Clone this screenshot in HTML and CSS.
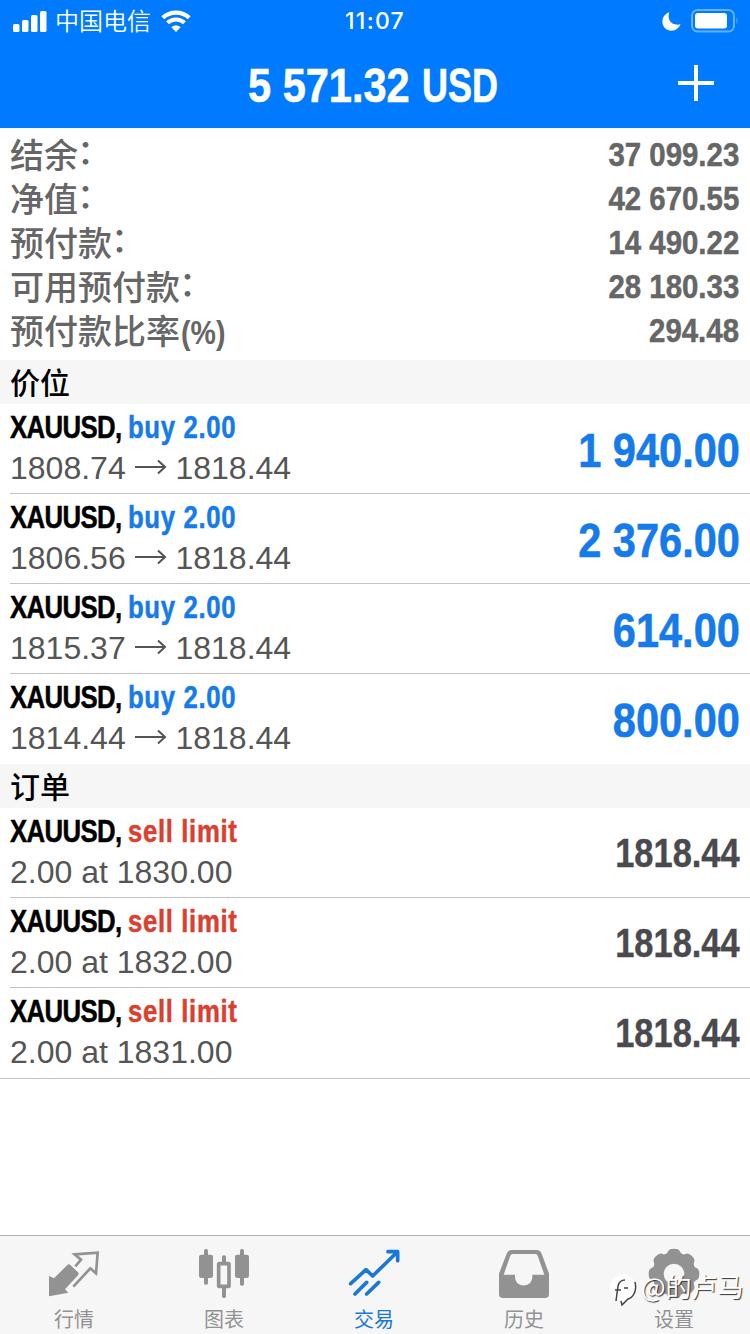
FILE: index.html
```html
<!DOCTYPE html>
<html lang="zh-CN">
<head>
<meta charset="utf-8">
<title>交易</title>
<link rel="stylesheet" href="styles.css">
</head>
<body>
<div class="app">
  <header class="header">
    <div class="status">
      <div class="carrier">
        <svg class="signal" viewBox="0 0 34 22"><rect x="0" y="14" width="6.5" height="8" rx="1.5"/><rect x="9" y="10" width="6.5" height="12" rx="1.5"/><rect x="18" y="5" width="6.5" height="17" rx="1.5"/><rect x="27" y="1" width="6.5" height="21" rx="1.5"/></svg>
        <span>中国电信</span>
        <svg class="wifi" viewBox="0 0 30 22"><path d="M1.8 7.8C9 .9 21 .9 28.2 7.8M6.5 12.8C11.2 8.400 18.800 8.400 23.500 12.800"/><path class="solid" d="M15 22l-4.700-4.700c2.600-2.300 6.800-2.300 9.400 0z"/></svg>
      </div>
      <time class="clock">11:07</time>
      <div class="power">
        <svg class="moon" viewBox="0 0 19 19"><path d="M7.300.3C4.800 8 9.800 14.300 18.600 12.300 16.600 16.600 13.700 18.700 9.600 18.700 4.400 18.700.400 14.800.400 9.700.400 5.100 3.100 1.700 7.300.3z"/></svg>
        <svg class="battery" viewBox="0 0 48 24"><rect class="shell" x="1" y="1" width="42" height="21.500" rx="5.500"/><rect x="4" y="4" width="32" height="15.500" rx="3"/><path class="tip" d="M45.500 8q2 3.700 0 7.500z"/></svg>
      </div>
    </div>
    <div class="titlebar">
      <h1 class="title"><span class="balance">5 571.32</span> <span class="currency">USD</span></h1>
      <svg class="plus" viewBox="0 0 36 36"><path d="M18 0v36M0 18h36"/></svg>
    </div>
  </header>

  <main class="content">
    <section class="account">
      <div class="account-row"><span>结余<i class="colon">：</i></span><b class="amount">37 099.23</b></div>
      <div class="account-row"><span>净值<i class="colon">：</i></span><b class="amount">42 670.55</b></div>
      <div class="account-row"><span>预付款<i class="colon">：</i></span><b class="amount">14 490.22</b></div>
      <div class="account-row"><span>可用预付款<i class="colon">：</i></span><b class="amount">28 180.33</b></div>
      <div class="account-row"><span>预付款比率<i class="percent">(%)</i></span><b class="amount">294.48</b></div>
    </section>

    <h2 class="section">价位</h2>
    <div class="list">
      <div class="row"><div class="deal"><div class="name">XAUUSD, <span class="buy">buy 2.00</span></div><div class="detail">1808.74 <svg class="arrow" viewBox="0 0 32 16"><path d="M0 8h30M23 1.500L30 8l-7 6.500"/></svg> 1818.44</div></div><b class="profit">1 940.00</b></div>
      <div class="row"><div class="deal"><div class="name">XAUUSD, <span class="buy">buy 2.00</span></div><div class="detail">1806.56 <svg class="arrow" viewBox="0 0 32 16"><path d="M0 8h30M23 1.500L30 8l-7 6.500"/></svg> 1818.44</div></div><b class="profit">2 376.00</b></div>
      <div class="row"><div class="deal"><div class="name">XAUUSD, <span class="buy">buy 2.00</span></div><div class="detail">1815.37 <svg class="arrow" viewBox="0 0 32 16"><path d="M0 8h30M23 1.500L30 8l-7 6.500"/></svg> 1818.44</div></div><b class="profit">614.00</b></div>
      <div class="row"><div class="deal"><div class="name">XAUUSD, <span class="buy">buy 2.00</span></div><div class="detail">1814.44 <svg class="arrow" viewBox="0 0 32 16"><path d="M0 8h30M23 1.500L30 8l-7 6.500"/></svg> 1818.44</div></div><b class="profit">800.00</b></div>
    </div>

    <h2 class="section">订单</h2>
    <div class="list orders">
      <div class="row"><div class="deal"><div class="name">XAUUSD, <span class="sell">sell limit</span></div><div class="detail">2.00 at 1830.00</div></div><b class="price">1818.44</b></div>
      <div class="row"><div class="deal"><div class="name">XAUUSD, <span class="sell">sell limit</span></div><div class="detail">2.00 at 1832.00</div></div><b class="price">1818.44</b></div>
      <div class="row"><div class="deal"><div class="name">XAUUSD, <span class="sell">sell limit</span></div><div class="detail">2.00 at 1831.00</div></div><b class="price">1818.44</b></div>
    </div>
  </main>

  <nav class="tabs">
    <a class="tab">
      <svg class="icon" viewBox="144 48 156 156"><path class="fill" d="M147 138l15 7 40-40q5-4 9 0l23 22q4 4 0 9l-39 42 10 10-58 11z"/><path class="line" d="M226 109l17-20-19-16 69-5-5 62-17-15-51 55" stroke-width="8"/></svg>
      <span>行情</span>
    </a>
    <a class="tab">
      <svg class="icon" viewBox="594 48 156 156"><g class="fill"><rect x="597" y="74" width="42" height="70" rx="7"/><rect x="612" y="57" width="12" height="107" rx="5"/><rect x="705" y="74" width="42" height="70" rx="7"/><rect x="720" y="57" width="12" height="110" rx="5"/><rect x="666" y="76" width="12" height="28" rx="5"/><rect x="666" y="168" width="12" height="36" rx="5"/></g><rect class="line" x="656" y="101" width="31" height="68" rx="2" stroke-width="11"/></svg>
      <span>图表</span>
    </a>
    <a class="tab active">
      <svg class="icon" viewBox="84 48 156 156"><path class="line round" d="M92 161l46-42 20 19 71-69M204 65h29v27M105 192l35-35M140 192l36-35" stroke-width="11"/></svg>
      <span>交易</span>
    </a>
    <a class="tab">
      <svg class="icon" viewBox="534 48 156 156"><path class="fill" fill-rule="evenodd" d="M576 60h73q12 0 16 11l22 60v62q0 11-11 11H548q-11 0-11-11v-62l23-60q4-11 16-11zM577 72q-4 0-6 5l-20 57h34v8c2 33 50 33 52 0v-8h36l-20-57q-2-5-6-5z"/></svg>
      <span>历史</span>
    </a>
    <a class="tab">
      <svg class="icon" viewBox="-78 -84 156 156">
        <circle class="line" r="47" stroke-width="32"/>
        <g class="fill">
          <path id="tooth" d="M-28-58Q-20-60-17-69-14-76 0-76T17-69Q20-60 28-58L20-50h-40z"/>
          <use href="#tooth" transform="rotate(45)"/><use href="#tooth" transform="rotate(90)"/><use href="#tooth" transform="rotate(135)"/><use href="#tooth" transform="rotate(180)"/><use href="#tooth" transform="rotate(225)"/><use href="#tooth" transform="rotate(270)"/><use href="#tooth" transform="rotate(315)"/>
        </g>
      </svg>
      <span>设置</span>
    </a>
    <div class="watermark">
      <svg viewBox="0 0 28 32"><path class="blob" d="M13 1C5 1 0 6 0 13s4 12 11 13l1 5 6-6c5-1 8-5 8-12S21 1 13 1z"/><path class="shade" d="M25 8c2 8-1 15-7 17l-6 6-1-4M6 27l2-15c1-4 3-6 7-6M5 16h6M14 14h4"/></svg>
      <span>@的卢马</span>
    </div>
  </nav>
</div>
</body>
</html>
```
FILE: styles.css
```css
* { box-sizing: border-box; }
body { margin: 0; background: #fff; font-family: "Liberation Sans", "Noto Sans CJK SC", sans-serif; }
.app { width: 750px; height: 1334px; display: flex; flex-direction: column; overflow: hidden; }
svg { display: block; flex: none; }

.header { height: 128px; background: #007aff; color: #fff; fill: #fff; }
.status { height: 40px; padding: 0 11px 0 13px; display: grid; grid-template-columns: 1fr auto 1fr; align-items: center; }
.carrier { display: flex; align-items: center; font: 350 24px/36px "Noto Sans CJK SC", sans-serif; }
.carrier span { margin-top: -3px; }
.signal { width: 34px; height: 22px; margin-right: 8px; margin-top: -1px; }
.wifi { width: 30px; height: 22px; margin-left: 10px; margin-top: -1px; fill: none; stroke: #fff; stroke-width: 4.200; }
.wifi .solid { fill: #fff; stroke: none; }
.clock { font: 500 23px/42px Inter, sans-serif; letter-spacing: 1.300px; margin-right: 2px; }
.power { display: flex; justify-content: flex-end; align-items: center; gap: 10px; }
.moon { width: 19px; height: 19px; }
.battery { width: 48px; height: 24px; margin-top: -1px; }
.battery .shell { fill: none; stroke: #66afff; stroke-width: 2; }
.battery .tip { fill: #66afff; }
.titlebar { height: 88px; padding: 0 36px; display: grid; grid-template-columns: 36px 1fr 36px; align-items: center; }
.title { grid-column: 2; margin: 0; padding-right: 4px; display: flex; justify-content: center; gap: 11px; font-size: 48px; line-height: 92px; white-space: nowrap; -webkit-text-stroke: .6px #fff; }
.balance { width: 163px; transform: scaleX(.865); transform-origin: left; }
.currency { width: 76px; transform: scaleX(.75); transform-origin: left; }
.plus { width: 36px; height: 36px; margin-top: -6px; stroke: #fff; stroke-width: 4; }

.content { flex: 1; }
.account { height: 232px; padding: 4px 11px 0 10px; color: #666; }
.account-row { height: 44px; display: flex; justify-content: space-between; font: 500 34px/43px "Noto Sans CJK SC", sans-serif; }
.amount { font: bold 34px/44px "Liberation Sans", sans-serif; transform: scaleX(.865); transform-origin: right; -webkit-text-stroke: .5px #666; }
.colon { display: inline-block; line-height: 34px; font-style: normal; margin-left: -1px; transform: translateY(-4px); }
.percent { display: inline-block; font: bold 34px/42px "Liberation Sans", sans-serif; transform: scaleX(.84); transform-origin: left; margin-left: 1px; }
.section { height: 44px; margin: 0; padding-left: 10px; background: #f6f6f6; color: #000; font: 500 30px/42px "Noto Sans CJK SC", sans-serif; }
.list { padding-left: 10px; }
.row { height: 90px; padding-right: 10px; display: flex; justify-content: space-between; border-bottom: 1px solid #c3c3c5; }
.list .row:last-child { border-bottom-color: transparent; }
.orders { border-bottom: 1px solid #c3c3c5; }
.deal { padding-top: 2px; }
.name { font-weight: bold; font-size: 32px; line-height: 42px; white-space: nowrap; color: #000; letter-spacing: -.8px; transform: scaleX(.805); transform-origin: left; -webkit-text-stroke: .5px; }
.buy { color: #157aea; letter-spacing: .8px; }
.sell { color: #d9402f; letter-spacing: .8px; }
.detail { font-size: 32px; line-height: 40px; color: #555; white-space: nowrap; }
.arrow { display: inline-block; width: 32px; height: 16px; fill: none; stroke: #555; stroke-width: 2; vertical-align: 4px; }
.profit { font-size: 48px; line-height: 94px; color: #157aea; transform: scaleX(.865); transform-origin: right; -webkit-text-stroke: .6px; }
.price { font-size: 40px; line-height: 90px; color: #4a4a4e; transform: scaleX(.86); transform-origin: right; -webkit-text-stroke: .4px; }

.tabs { position: relative; height: 99px; display: grid; grid-template-columns: repeat(5, 150px); background: #f6f6f6; border-top: 1px solid #b2b2b2; }
.tab { display: flex; flex-direction: column; align-items: center; padding: 10px 2px 0 0; color: #929292; font: 400 20px/28px "Noto Sans CJK SC", sans-serif; }
.tab > span { margin-top: 7px; }
.active { color: #1a78d8; }
.icon { width: 52px; height: 52px; }
.icon .fill { fill: currentColor; }
.icon .line { fill: none; stroke: currentColor; }
.icon .round { stroke-linecap: round; stroke-linejoin: round; }
.watermark { position: absolute; left: 610px; top: 33px; display: flex; align-items: flex-start; gap: 3px; color: #fff; font: 400 26px/34px "Noto Sans CJK SC", sans-serif; text-shadow: 1px 1px 1px #333; white-space: nowrap; }
.watermark svg { width: 28px; height: 32px; margin-top: 5px; }
.watermark .blob { fill: #fff; }
.watermark .shade { fill: none; stroke: #444; stroke-width: 1.500; }
```
